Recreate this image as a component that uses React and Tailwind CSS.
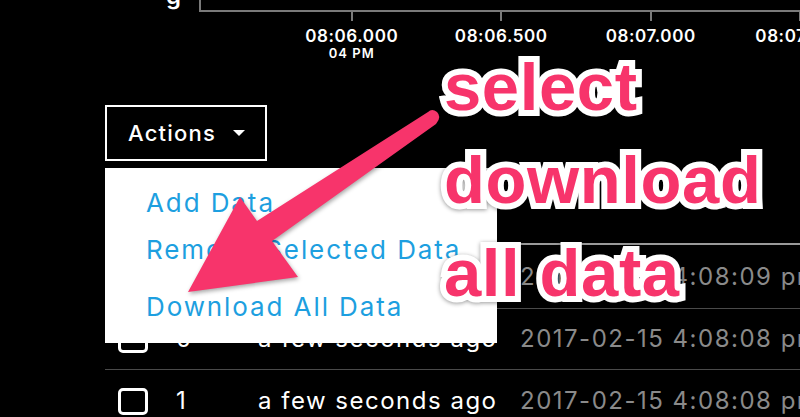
import React from "react";

const ui = { fontFamily: "Inter, 'Noto Sans', sans-serif" };

function Row({ idx, date, last, h }) {
  return (
    <div className={"flex items-center " + h + " " + (last ? "" : "border-b border-[#4a4a4a]")}>
      <div className="w-[13px] shrink-0" />
      <div className="w-[30px] h-[27px] shrink-0 rounded-[5px] border-[3px] border-white" />
      <div className="w-[28px] shrink-0" />
      <div className="w-[82px] shrink-0 text-white text-[24px] tracking-[1.4px]">{idx}</div>
      <div className="w-[262px] shrink-0 text-white text-[24px] tracking-[1.5px] whitespace-nowrap">a few seconds ago</div>
      <div className="shrink-0 text-[#8a8a8a] text-[24px] tracking-[1.5px] whitespace-nowrap">{date}</div>
    </div>
  );
}

export default function App() {
  return (
    <div className="relative w-[800px] h-[417px] overflow-hidden bg-black" style={ui}>
      {/* chart top */}
      <div className="relative h-[12px]">
        <div className="absolute left-[166px] top-[-22px] text-white text-[24px] font-semibold">g</div>
        <div className="ml-[199px] h-[12px] border-l-2 border-b-2 border-[#7a7a7a]" />
      </div>
      {/* axis */}
      <div className="flex ml-[277px]">
        {[["08:06.000", "04 PM"], ["08:06.500", ""], ["08:07.000", ""], ["08:07.500", ""]].map(([t, s], i) => (
          <div key={i} className="w-[149.5px] shrink-0 flex flex-col items-center">
            <div className="w-[2px] h-[9px] bg-[#7a7a7a]" />
            <div className="mt-[5px] text-white text-[17px] font-semibold tracking-[0.6px] leading-[20px] whitespace-nowrap">{t}</div>
            <div className="text-white text-[13px] font-semibold tracking-[1px] leading-[14px]">{s}</div>
          </div>
        ))}
      </div>
      {/* actions */}
      <div className="mt-[45px] ml-[105px] w-[162px] h-[56px] border-2 border-white flex items-center pl-[21px] gap-[17px]">
        <span className="text-white text-[22px] font-medium tracking-[1.2px]">Actions</span>
        <svg width="12" height="6" viewBox="0 0 12 6"><path d="M0 0 L12 0 L6 6 Z" fill="white" /></svg>
      </div>
      {/* table */}
      <div className="mt-[82px] ml-[105px] border-t-2 border-[#9a9a9a]">
        <Row idx="2" date="2017-02-15 4:08:09 pm" h="h-[64px]" />
        <Row idx="0" date="2017-02-15 4:08:08 pm" h="h-[61px]" />
        <Row idx="1" date="2017-02-15 4:08:08 pm" h="h-[62px]" last />
      </div>

      {/* dropdown menu */}
      <div className="absolute left-[105px] top-[168px] w-[392px] h-[175px] bg-white flex flex-col pl-[41px] pt-[17px] text-[#1d9fe0] text-[26px] tracking-[1.9px]">
        <div className="h-[47px] leading-[36px]">Add Data</div>
        <div className="h-[57px] leading-[36px]">Remove Selected Data</div>
        <div className="leading-[36px]">Download All Data</div>
      </div>

      {/* arrow */}
      <svg className="absolute left-0 top-0" width="800" height="417" viewBox="0 0 800 417" style={{ filter: "drop-shadow(1px 2px 2px rgba(0,0,0,0.35))" }}>
        <path d="M428 112 L257 221 L240 197 L188 292 L298 277 L272 241 L436 124 Q442 117 437 112 Q432 108 428 112 Z" fill="#f7346b" />
      </svg>

      {/* annotation text */}
      <div
        className="absolute left-[444px] top-[40px] text-[#f7346b] text-[67px] font-bold leading-[93px] tracking-[0.6px] whitespace-nowrap [-webkit-text-stroke:12px_white] [paint-order:stroke_fill]"
        style={{ fontFamily: "'Liberation Sans', Arial, sans-serif", filter: "drop-shadow(0 1px 2px rgba(0,0,0,0.4))" }}
      >
        <div>select</div>
        <div>download</div>
        <div>all data</div>
      </div>
    </div>
  );
}
